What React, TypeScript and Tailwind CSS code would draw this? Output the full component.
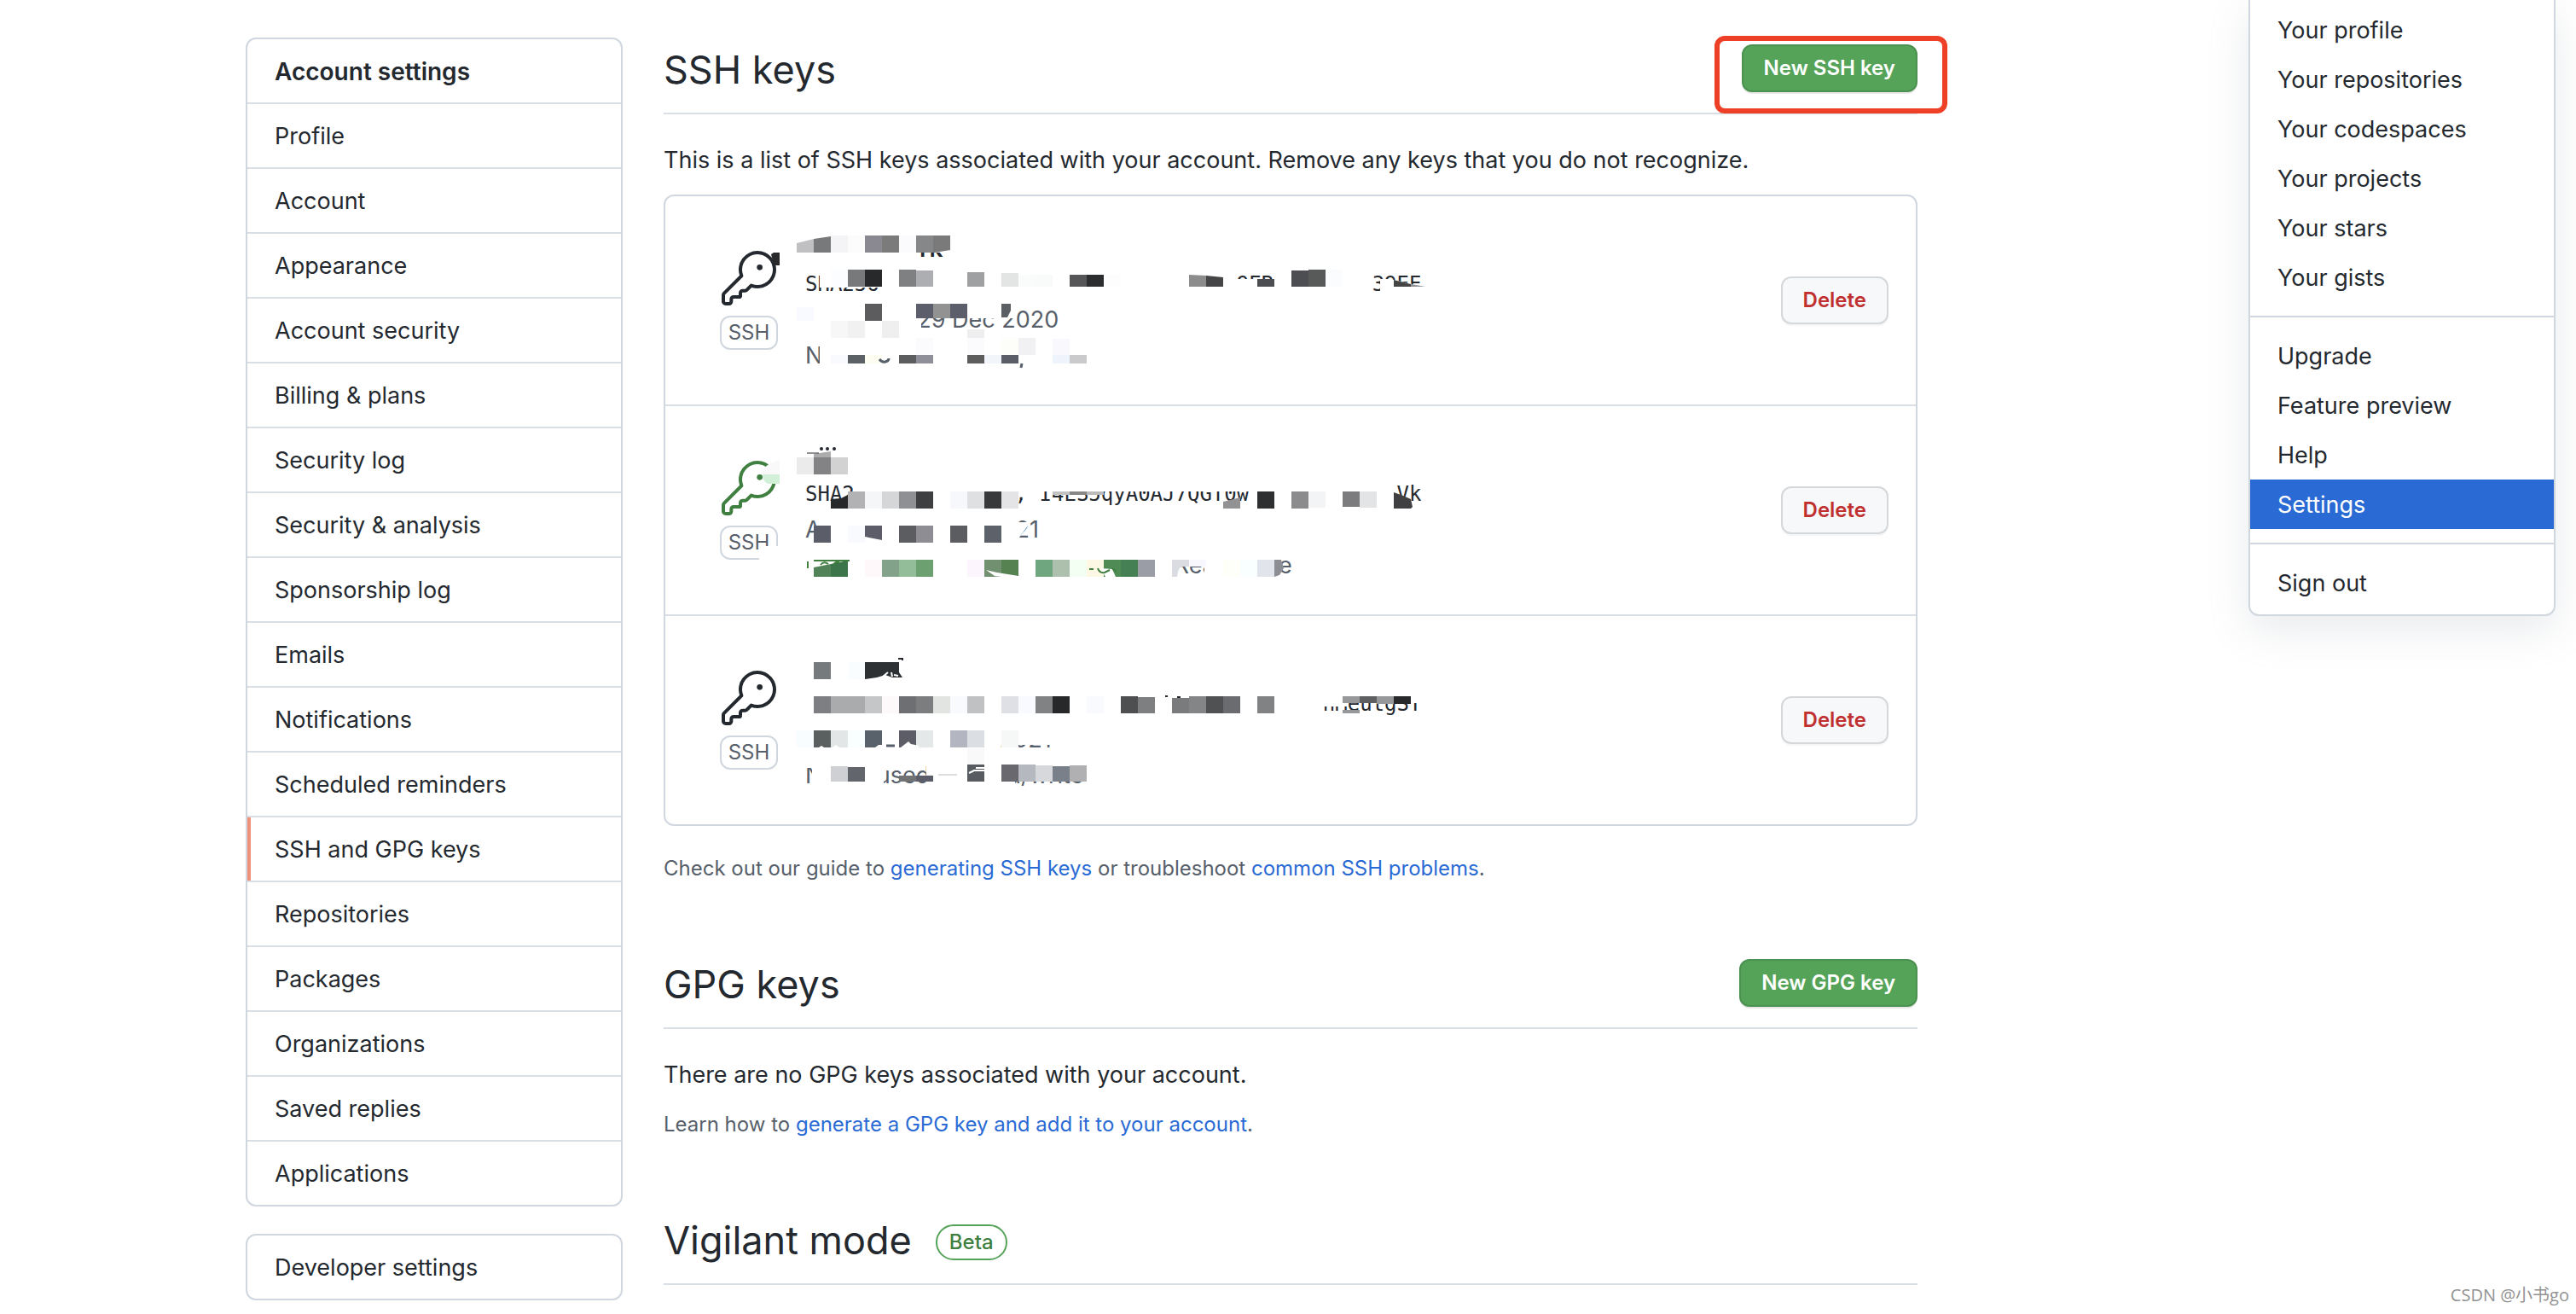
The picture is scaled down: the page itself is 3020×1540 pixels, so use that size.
import type { ReactNode } from "react";

type Block = [col: number, top: number, bottom: number, color: string];

type KeyLine = {
  text: string;
  className?: string;
};

type SshKey = {
  id: string;
  active: boolean;
  lines: KeyLine[];
  mosaic: ReactNode;
};

const settingsLinks = [
  "Profile",
  "Account",
  "Appearance",
  "Account security",
  "Billing & plans",
  "Security log",
  "Security & analysis",
  "Sponsorship log",
  "Emails",
  "Notifications",
  "Scheduled reminders",
  "SSH and GPG keys",
  "Repositories",
  "Packages",
  "Organizations",
  "Saved replies",
  "Applications",
];

const menuGroups = [
  ["Your profile", "Your repositories", "Your codespaces", "Your projects", "Your stars", "Your gists"],
  ["Upgrade", "Feature preview", "Help", "Settings"],
  ["Sign out"],
];

// The censor mosaic snaps to 20px columns, the first one starts at 154.
const Blocks = ({ items }: { items: Block[] }) => (
  <>
    {items.map(([col, top, bottom, color]) => (
      <rect key={`${col}-${top}`} x={154 + col * 20} y={top} width={20} height={bottom - top} fill={color} />
    ))}
  </>
);

const firstMosaic = (
  <>
    <path fill="#fff" d="M154 40H340V66H154ZM181 84H268V107H181ZM668 97H716V118H668ZM838 97L850 97L888 106V118H838ZM160 122H300V166H160ZM300 122H412V143H300ZM181 168L200 184H214V206H181ZM200 168H500V206H200Z" />
    <path fill="#28292b" d="M124 68L127 66H134V81H129L126 76Z" />
    <path fill="#c0c0c2" d="M154 55L174 50V66H154Z" />
    <path fill="#78797b" d="M174 50L194 47V66H174Z" />
    <path fill="#7a7a7a" d="M314 46H334V63L316 66H314Z" />
    <Blocks
      items={[
        [2, 46, 66, "#f4f4f6"],
        [3, 46, 66, "#fcfcfd"],
        [4, 46, 66, "#8a8991"],
        [5, 46, 66, "#7b7b7b"],
        [6, 46, 66, "#fbfbfe"],
        [7, 46, 66, "#868788"],
        [2, 86, 106, "#fbfdfe"],
        [3, 86, 106, "#78797b"],
        [4, 86, 106, "#28292b"],
        [6, 86, 106, "#7e8082"],
        [7, 87, 106, "#adaeb1"],
        [10, 89, 106, "#9fa0a2"],
        [12, 90, 106, "#e3e5e5"],
        [13, 92, 106, "#f9fcfb"],
        [14, 92, 106, "#f8fbfa"],
        [16, 92, 106, "#565658"],
        [17, 92, 106, "#2c2d2f"],
        [18, 92, 106, "#fdfdfd"],
        [27, 97, 106, "#4c4d50"],
        [29, 87, 106, "#4d4e51"],
        [30, 86, 106, "#585a59"],
        [31, 86, 106, "#fbfcfe"],
        [0, 130, 146, "#f8faff"],
        [4, 126, 146, "#5c5c5e"],
        [7, 126, 143, "#5c5f6b"],
        [8, 126, 143, "#929292"],
        [9, 126, 143, "#5c5f6b"],
        [2, 146, 166, "#f7f7f7"],
        [3, 146, 166, "#f1f1f1"],
        [5, 146, 166, "#efefef"],
        [10, 156, 166, "#eeeeee"],
        [7, 166, 186, "#fbfbfe"],
        [10, 166, 186, "#fbfbfe"],
        [12, 166, 186, "#fdfdf9"],
        [13, 166, 186, "#f1f1f4"],
        [15, 167, 186, "#f9f9fd"],
        [2, 186, 196, "#f8fafd"],
        [3, 186, 196, "#5c6165"],
        [4, 186, 196, "#fdfdf2"],
        [6, 186, 196, "#5c5d5f"],
        [7, 186, 196, "#8f8f9a"],
        [10, 186, 196, "#5d5d5d"],
        [11, 186, 196, "#f2f5fa"],
        [12, 186, 196, "#5b5d67"],
        [15, 186, 196, "#eff3fb"],
        [16, 186, 196, "#cacacc"],
      ]}
    />
    <path fill="#8b8c8b" d="M614 92L634 93V106H614Z" />
    <path fill="#454547" d="M634 93L654 95V106H634Z" />
    <path fill="#454546" d="M854 98L874 103V106H854Z" />
    <path fill="#8f8f94" d="M874 103L891 106H874Z" />
    <path fill="#5c5f63" d="M394 126H405V134L401 142H394Z" />
    <path fill="none" stroke="#57606a" strokeWidth="3" d="M251 191Q254 195 258 194Q262 193 262 190M418 196L417 201" />
  </>
);

const secondMosaic = (
  <>
    <path fill="#fff" d="M154 40H340V82H154ZM440 90H692V100H440ZM220 134H300V164H220ZM408 136H428L412 158H408ZM154 170H497V206H154ZM497 170H525V190L510 196H497ZM497 196H602V206H497ZM525 170H602V206H525ZM602 170H632V188H602ZM632 170H722V206H632ZM110 164H134V184H110Z" />
    <path fill="#f9f9f9" d="M113 79Q115 68 134 63V80H113Z" />
    <path fill="#d2f0d8" d="M114 80H134V91H120Q114 88 114 80Z" />
    <path fill="#acacac" d="M174 56L194 53V60H174Z" />
    <path stroke="#24292f" d="M166 55H180" />
    <g fill="#24292f">
      <circle cx="183" cy="50" r="2" />
      <circle cx="190" cy="50" r="2" />
      <circle cx="198" cy="50" r="2" />
    </g>
    <Blocks
      items={[
        [0, 60, 80, "#ebebeb"],
        [1, 60, 80, "#838386"],
        [2, 60, 80, "#d2d2d2"],
        [3, 100, 120, "#b2b2b4"],
        [4, 100, 120, "#f5f6f7"],
        [5, 100, 120, "#d5d6d7"],
        [6, 100, 120, "#8f9093"],
        [7, 100, 120, "#3e3f41"],
        [9, 100, 120, "#f7f8fb"],
        [10, 100, 120, "#dfe0e1"],
        [11, 100, 120, "#38393b"],
        [12, 100, 120, "#e4e4e6"],
        [15, 100, 104, "#c2c2c2"],
        [16, 100, 104, "#878788"],
        [17, 100, 104, "#bbbbbc"],
        [27, 100, 120, "#2e2f31"],
        [29, 100, 120, "#8b8b8d"],
        [30, 100, 119, "#f3f4f5"],
        [32, 100, 118, "#7c7c7e"],
        [33, 100, 119, "#e3e4e5"],
        [1, 140, 160, "#5b5d68"],
        [3, 140, 160, "#f9fafd"],
        [6, 140, 160, "#5c5d60"],
        [7, 140, 160, "#8e8d93"],
        [9, 140, 160, "#5c5d60"],
        [11, 140, 160, "#5c616a"],
        [4, 180, 200, "#fff8fb"],
        [5, 180, 200, "#82a28a"],
        [6, 180, 200, "#92bd98"],
        [7, 180, 200, "#6ca070"],
        [10, 180, 200, "#fdf5fd"],
        [11, 180, 200, "#71906f"],
        [12, 180, 200, "#568150"],
        [14, 180, 200, "#6fa57f"],
        [15, 180, 200, "#adbfad"],
        [16, 180, 200, "#f4fff4"],
        [17, 180, 200, "#fdf8e3"],
        [18, 180, 200, "#4e8b55"],
        [19, 180, 200, "#458055"],
        [20, 180, 200, "#9b9da6"],
        [25, 180, 200, "#fffffa"],
        [26, 180, 200, "#f9fffe"],
        [27, 180, 200, "#e1e4ea"],
      ]}
    />
    <path fill="#27282a" d="M194 109L206 108L214 104V120H194Z" />
    <path fill="#929294" d="M654 112L674 107V120H654Z" />
    <path fill="#404042" d="M854 101L865 105L874 109L876 118L874 120H854Z" />
    <path fill="#5c5d69" d="M234 140H254V157L234 153Z" />
    <path fill="#518258" d="M174 189L194 185V200H174Z" />
    <path fill="#3c754a" d="M194 185L214 181V200H194Z" />
    <path fill="none" stroke="#3f7f3f" strokeWidth="2" d="M167 182V190M174 181H216M182 186Q186 181 191 185M197 186Q200 181 205 184" />
    <path fill="#dbdce2" d="M594 180H614V188H604L601 194L600 200H594Z" />
    <path fill="#f7f7fd" d="M614 180H634V188H614Z" />
    <path fill="#8d8e94" d="M714 180H722L725 190L720 198L714 200Z" />
    <path fill="#fff" d="M376 192L389 195L414 199V200H394L386 199ZM510 190L524 191L528 200H516Z" />
    <path fill="none" stroke="#3f7f3f" strokeWidth="2" d="M497 191H502M507 190Q509 196 515 195L521 192M524 190L528 194" />
  </>
);

const thirdMosaic = (
  <>
    <path fill="#fff" d="M160 40H330V80H160ZM765 88H890V102H765ZM760 96H800V106H780L760 106ZM160 122H470V151H160ZM172 168H256V206H172ZM164 168H172V178H164ZM306 168H520V194H306ZM306 194H410V206H306Z" />
    <Blocks
      items={[
        [1, 54, 74, "#777a7d"],
        [3, 54, 74, "#f9fdff"],
        [1, 94, 114, "#7e7f83"],
        [2, 94, 114, "#aaabad"],
        [3, 94, 114, "#aaabac"],
        [4, 94, 114, "#c5c6c8"],
        [5, 94, 114, "#fdf9fa"],
        [6, 94, 114, "#6d6f72"],
        [7, 94, 114, "#7c7d7e"],
        [8, 94, 114, "#e1e4e0"],
        [9, 94, 114, "#f8fafe"],
        [10, 94, 114, "#c0c1c3"],
        [12, 94, 114, "#dfe0e5"],
        [13, 94, 114, "#f9faff"],
        [14, 94, 114, "#818284"],
        [15, 94, 114, "#27282a"],
        [17, 94, 114, "#f9fafe"],
        [19, 94, 114, "#4e4f51"],
        [20, 95, 114, "#7e7f81"],
        [22, 96, 114, "#7a7b7c"],
        [23, 94, 114, "#848587"],
        [24, 94, 114, "#505153"],
        [25, 94, 114, "#6b6c70"],
        [27, 94, 114, "#818284"],
        [32, 94, 102, "#97989a"],
        [32, 110, 114, "#97989a"],
        [33, 94, 102, "#5e5f60"],
        [34, 94, 103, "#97989a"],
        [35, 94, 103, "#27282a"],
        [0, 134, 154, "#f8feff"],
        [1, 134, 154, "#5a5f60"],
        [2, 134, 154, "#e3e6e7"],
        [3, 134, 154, "#f9ffff"],
        [4, 134, 154, "#59616b"],
        [6, 134, 154, "#5d5d68"],
        [7, 134, 154, "#e5e8e8"],
        [9, 134, 154, "#b3b6c0"],
        [10, 134, 154, "#dbdee2"],
        [12, 134, 154, "#f6f7f7"],
        [10, 155, 174, "#f9f9fa"],
        [2, 176, 194, "#cfd0d4"],
        [3, 177, 194, "#62656b"],
        [6, 187, 194, "#707274"],
        [7, 187, 194, "#5b5e69"],
        [10, 174, 194, "#585c61"],
        [12, 174, 194, "#69686e"],
        [13, 174, 194, "#b5b8bf"],
        [14, 175, 194, "#d7d8dc"],
        [15, 176, 194, "#7a808a"],
        [16, 175, 194, "#b0b0b3"],
      ]}
    />
    <path fill="#2e3134" d="M234 54H274V66L278 72L266 72L258 69L248 72L234 74Z" />
    <path fill="none" stroke="#24292f" strokeWidth="2" d="M273 50H278V52" />
    <path fill="none" stroke="#fff" strokeWidth="2" d="M255 71L261 66M265 66L266 71M268 69L273 70" />
    <path fill="#fff" d="M180 154L183 152L186 154ZM196 154L200 151L204 154ZM246 154L250 151H264L268 154ZM276 154L285 147L288 150L298 152L296 154Z" />
    <path stroke="#57606a" strokeWidth="3" d="M259 152H269" />
    <path stroke="#b9bcc1" d="M320 186H342" />
    <path fill="none" stroke="#fff" strokeWidth="2" d="M356 184L362 181L374 181M364 178L374 178" />
    <path stroke="#24292f" strokeWidth="2" d="M586 94H589M600 95H604" />
  </>
);

const sshKeys: SshKey[] = [
  {
    id: "first",
    active: false,
    lines: [
      { text: " ".repeat(19) + "rk", className: "text-[28px] font-semibold text-[#24292f]" },
      {
        text: "SHA256" + " ".repeat(29) + "9EB" + " ".repeat(8) + "39EE",
        className: "font-['DejaVu_Sans_Mono',monospace] text-[24px] text-[#24292f]",
      },
      { text: "Added on 29 Dec 2020", className: "text-[27px]" },
      { text: "Never used — Read/write", className: "text-[27px]" },
    ],
    mosaic: firstMosaic,
  },
  {
    id: "second",
    active: true,
    lines: [
      { text: " ", className: "text-[28px] font-semibold text-[#24292f]" },
      {
        text: "SHA2" + " ".repeat(13) + ", I4ES5qyA0AJ7QGT0w" + " ".repeat(12) + "Vk",
        className: "font-['DejaVu_Sans_Mono',monospace] text-[24px] text-[#24292f]",
      },
      { text: "A" + " ".repeat(30) + "21", className: "text-[27px]" },
      { text: " ".repeat(57) + "Read/write", className: "text-[27px]" },
    ],
    mosaic: secondMosaic,
  },
  {
    id: "third",
    active: false,
    lines: [
      { text: " ", className: "text-[28px] font-semibold text-[#24292f]" },
      {
        text: " ".repeat(42) + "nMeutgST",
        className: "font-['DejaVu_Sans_Mono',monospace] text-[24px] text-[#24292f]",
      },
      { text: " ".repeat(30) + "2021", className: "text-[27px]" },
      { text: "Never used — Read/write", className: "text-[27px]" },
    ],
    mosaic: thirdMosaic,
  },
];

const KeyIcon = ({ active }: { active: boolean }) => (
  <svg
    viewBox="0 0 24 24"
    className={active ? "h-16 w-16 text-[#3f7f3f]" : "h-16 w-16 text-[#24292f]"}
    fill="currentColor"
    aria-hidden="true"
  >
    <path d="M16.75 8.5a1.25 1.25 0 100-2.5 1.25 1.25 0 000 2.5z" />
    <path
      fillRule="evenodd"
      d="M15.75 0a8.25 8.25 0 00-7.851 10.79L.513 18.178A1.75 1.75 0 000 19.414v2.836C0 23.217.784 24 1.75 24h1.5A1.75 1.75 0 005 22.25v-1a.25.25 0 01.25-.25h2.735a.75.75 0 00.545-.22l.214-.213A.875.875 0 009 19.948V18.5a.25.25 0 01.25-.25h1.086c.464 0 .91-.184 1.237-.513l1.636-1.636A8.25 8.25 0 1015.75 0zM9 8.25a6.75 6.75 0 114.288 6.287.75.75 0 00-.804.168l-1.971 1.972a.25.25 0 01-.177.073H9.25A1.75 1.75 0 007.5 18.5v1H5.25a1.75 1.75 0 00-1.75 1.75v1a.25.25 0 01-.25.25h-1.5a.25.25 0 01-.25-.25v-2.836a.25.25 0 01.073-.177l7.722-7.721a.75.75 0 00.168-.804A6.73 6.73 0 019 8.25z"
    />
  </svg>
);

const PrimaryButton = ({ children }: { children: ReactNode }) => (
  <button
    type="button"
    className="h-14 rounded-xl border-2 border-[#4b9150] bg-[#55a358] px-6 text-[24px] font-semibold text-white shadow-[0_2px_0_rgba(27,31,36,0.1)] hover:bg-[#4b9150]"
  >
    {children}
  </button>
);

const SectionHeader = ({ title, badge, action }: { title: string; badge?: string; action?: ReactNode }) => (
  <div className="mb-8 flex items-start justify-between border-b-2 border-[#d8dee4] pb-3">
    <div className="flex items-center gap-7">
      <h2 className="text-[45px] leading-[76px] font-normal">{title}</h2>
      {badge ? (
        <span className="mt-1 rounded-full border-2 border-[#55a358] px-[14px] text-[24px] leading-[38px] font-medium text-[#3f7f3f]">
          {badge}
        </span>
      ) : null}
    </div>
    {action ? <div className="relative mt-2">{action}</div> : null}
  </div>
);

const TextLink = ({ children }: { children: ReactNode }) => (
  <a href="#" className="text-[#2a6ad4] hover:underline">
    {children}
  </a>
);

const SshKeyRow = ({ item }: { item: SshKey }) => (
  <li className="relative flex h-[244px] items-center pl-16 pr-8 box-content">
    <div className="flex w-[68px] flex-col items-center gap-3">
      <KeyIcon active={item.active} />
      <span className="w-full rounded-xl border-2 border-[#d0d7de] text-center text-[24px] leading-9 text-[#57606a]">
        SSH
      </span>
    </div>
    <div className="ml-8 mt-1 flex-1 whitespace-pre leading-[42px] text-[#57606a]">
      {item.lines.map((line, index) => (
        <div key={index} className={line.className}>
          {line.text}
        </div>
      ))}
    </div>
    <svg viewBox="0 0 900 244" className="absolute left-0 top-0 h-[244px] w-[900px]" aria-hidden="true">
      {item.mosaic}
    </svg>
    <button
      type="button"
      className="h-14 rounded-xl border-2 border-[#d5d8db] bg-[#f6f8fa] px-6 text-[24px] font-semibold text-[#c0302f] shadow-[0_2px_0_rgba(27,31,36,0.04)] hover:bg-[#c0302f] hover:text-white"
    >
      Delete
    </button>
  </li>
);

const Sidebar = () => (
  <aside className="w-[442px] shrink-0 text-[27px] leading-[42px]">
    <nav className="divide-y-2 divide-[#d8dee4] overflow-hidden rounded-xl border-2 border-[#d0d7de]">
      <h2 className="px-8 pt-[17px] pb-[15px] text-[28px] font-semibold">Account settings</h2>
      {settingsLinks.map((label) => (
        <a
          key={label}
          href="#"
          className={
            label === "SSH and GPG keys"
              ? "block px-8 pt-[17px] pb-[15px] shadow-[inset_4px_0_0_#f0917c]"
              : "block px-8 pt-[17px] pb-[15px] hover:bg-[#f6f8fa]"
          }
        >
          {label}
        </a>
      ))}
    </nav>
    <nav className="mt-8 rounded-xl border-2 border-[#d0d7de]">
      <a href="#" className="block px-8 pt-[17px] pb-[15px]">
        Developer settings
      </a>
    </nav>
  </aside>
);

const UserMenu = () => (
  <nav className="w-[360px] shrink-0 divide-y-2 divide-[#d0d7de] rounded-b-xl border-x-2 border-b-2 border-[#d0d7de] bg-white text-[27px] leading-[42px] shadow-[0_16px_48px_rgba(140,149,159,0.2)]">
    {menuGroups.map((group, index) => (
      <div key={group[0]} className={index === 0 ? "pb-4 pt-[6px]" : index === 1 ? "py-4" : "pb-2 pt-4"}>
        {group.map((label) => (
          <a
            key={label}
            href="#"
            className={
              label === "Settings"
                ? "block bg-[#2a6ad4] px-8 pt-[9px] pb-[7px] text-white"
                : "block px-8 pt-[9px] pb-[7px] hover:bg-[#2a6ad4] hover:text-white"
            }
          >
            {label}
          </a>
        ))}
      </div>
    ))}
  </nav>
);

const App = () => {
  return (
    <div className="relative flex min-h-screen items-start justify-between bg-white pl-72 pr-6 font-[Inter,sans-serif] text-[#24292f]">
      <div className="flex max-w-[1960px] flex-1 items-start gap-12 pt-11">
        <Sidebar />

        <main className="min-w-0 flex-1">
          <section>
            <SectionHeader
              title="SSH keys"
              action={
                <>
                  <PrimaryButton>New SSH key</PrimaryButton>
                  <span className="pointer-events-none absolute -bottom-[25px] -left-8 -right-[35px] -top-[10px] rounded-xl border-6 border-[#ee4026]" />
                </>
              }
            />
            <p className="text-[27px] leading-[44px]">
              This is a list of SSH keys associated with your account. Remove any keys that you do not recognize.
            </p>
            <ul className="mt-[18px] divide-y-2 divide-[#d8dee4] rounded-xl border-2 border-[#d0d7de]">
              {sshKeys.map((item) => (
                <SshKeyRow key={item.id} item={item} />
              ))}
            </ul>
            <p className="mt-8 text-[24px] leading-9 text-[#57606a]">
              Check out our guide to <TextLink>generating SSH keys</TextLink> or troubleshoot{" "}
              <TextLink>common SSH problems</TextLink>.
            </p>
          </section>

          <section className="mt-20">
            <SectionHeader title="GPG keys" action={<PrimaryButton>New GPG key</PrimaryButton>} />
            <p className="text-[27px] leading-[44px]">There are no GPG keys associated with your account.</p>
            <p className="mt-[18px] text-[24px] leading-9 text-[#57606a]">
              Learn how to <TextLink>generate a GPG key and add it to your account</TextLink>.
            </p>
          </section>

          <section className="mt-20">
            <SectionHeader title="Vigilant mode" badge="Beta" />
          </section>
        </main>
      </div>

      <UserMenu />

      <span className="absolute bottom-[6px] right-2 font-['Open_Sans','Noto_Sans_CJK_SC',sans-serif] text-[20px] leading-8 text-[#929292]">
        CSDN @小书go
      </span>
    </div>
  );
};

export default App;
